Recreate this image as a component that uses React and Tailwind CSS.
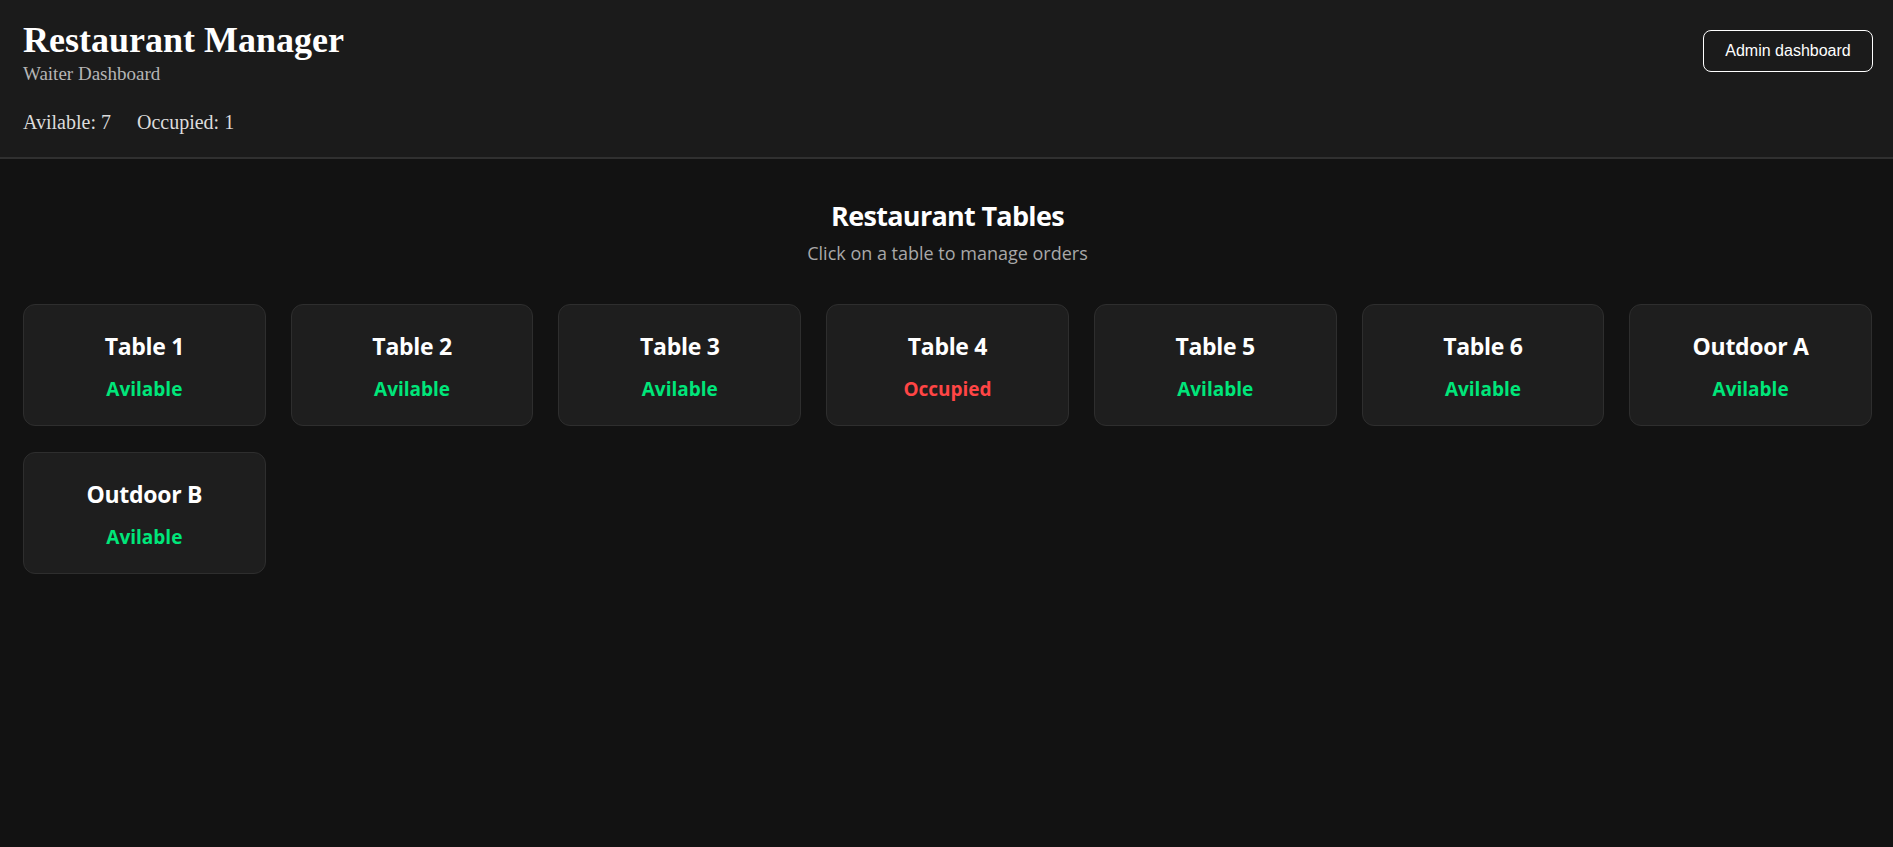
import { useState } from "react";

const tables = [
    { id: 1, name: "Table 1", occupied: false },
    { id: 2, name: "Table 2", occupied: false },
    { id: 3, name: "Table 3", occupied: false },
    { id: 4, name: "Table 4", occupied: true },
    { id: 5, name: "Table 5", occupied: false },
    { id: 6, name: "Table 6", occupied: false },
    { id: 7, name: "Outdoor A", occupied: false },
    { id: 8, name: "Outdoor B", occupied: false },
];

export default function App() {
    const [selected, setSelected] = useState(null);

    const available = tables.filter(t => !t.occupied).length;
    const occupied = tables.length - available;

    return (
        <div className="min-h-screen bg-[#121212] text-white">
            <header className="flex items-start justify-between bg-[#1b1b1b] border-b-2 border-[#303030] pl-[23px] pr-[20px] pt-[20px] pb-[24px] font-['Liberation_Serif',serif]">
                <div>
                    <h1 className="text-[36px] leading-[41px] font-bold">Restaurant Manager</h1>
                    <p className="text-[19px] leading-[22px] text-[#b5b5b5] mt-[2px]">Waiter Dashboard</p>
                    <div className="flex gap-[26px] text-[20px] leading-[22px] text-[#dcdcdc] mt-[26px]">
                        <span>Avilable: {available}</span>
                        <span>Occupied: {occupied}</span>
                    </div>
                </div>

                <button className="mt-[10px] h-[42px] w-[170px] rounded-[8px] border border-white text-[16px] font-['Liberation_Sans',Arial,sans-serif] text-white">
                    Admin dashboard
                </button>
            </header>

            <main className="pl-[23px] pr-[21px] pt-[38px] font-['Open_Sans','Noto_Sans',sans-serif]">
                <div className="text-center">
                    <h2 className="text-[27px] leading-[38px] font-bold tracking-[-0.7px]">Restaurant Tables</h2>
                    <p className="text-[18px] leading-[26px] text-[#a8a8a8] mt-[5px]">Click on a table to manage orders</p>
                </div>

                <div className="grid grid-cols-7 gap-x-[25px] gap-y-[26px] mt-[38px]">
                    {tables.map(table => (
                        <button
                            key={table.id}
                            onClick={() => setSelected(table.id)}
                            className={`flex h-[122px] flex-col items-center justify-start pt-[26px] rounded-[12px] border bg-[#1e1e1e] ${
                                selected === table.id ? "border-[#555]" : "border-[#2e2e2e]"
                            }`}
                        >
                            <span className="text-[23px] leading-[31px] font-bold text-white tracking-[-0.3px]">{table.name}</span>
                            <span
                                className={`mt-[14px] text-[19px] leading-[26px] font-bold ${
                                    table.occupied ? "text-[#ff4545]" : "text-[#00e67a]"
                                }`}
                            >
                                {table.occupied ? "Occupied" : "Avilable"}
                            </span>
                        </button>
                    ))}
                </div>
            </main>
        </div>
    );
}
